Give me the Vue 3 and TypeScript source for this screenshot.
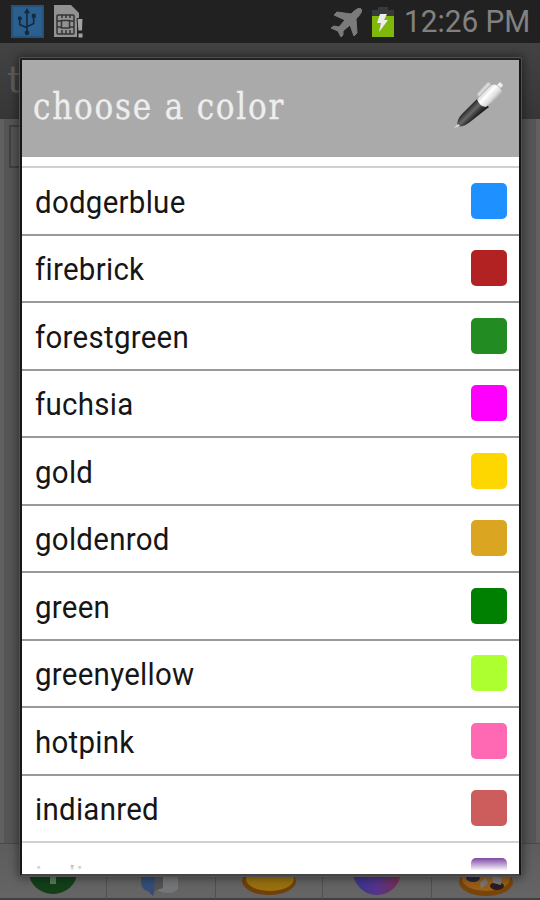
<script setup lang="ts">
interface NamedColor {
  name: string
  value: string
}

const colors: NamedColor[] = [
  { name: 'dodgerblue', value: '#1e90ff' },
  { name: 'firebrick', value: '#b22222' },
  { name: 'forestgreen', value: '#228b22' },
  { name: 'fuchsia', value: '#ff00ff' },
  { name: 'gold', value: '#ffd700' },
  { name: 'goldenrod', value: '#daa520' },
  { name: 'green', value: '#008000' },
  { name: 'greenyellow', value: '#adff2f' },
  { name: 'hotpink', value: '#ff69b4' },
  { name: 'indianred', value: '#cd5c5c' },
  { name: 'indigo', value: '#4b0082' },
]
</script>

<template>
  <div class="screen">
    <header class="status">
      <svg class="usb" width="33" height="33" viewBox="0 0 32 32">
        <rect width="32" height="32" rx="1" fill="#2a6090" />
        <rect x="1" y="1" width="30" height="30" fill="none" stroke="#24527a" stroke-width="2" />
        <path d="M15.500 27V6M15.500 22L8.500 19V14M15.500 21L22 18V11" fill="none" stroke="#172a3c" stroke-width="1.600" />
        <g fill="#172a3c">
          <path d="M15.500 3L18.500 8H12.500Z" />
          <circle cx="15.500" cy="27" r="2.300" />
          <circle cx="8.500" cy="13" r="2" />
          <rect x="20.200" y="8.500" width="3.800" height="3.800" />
        </g>
      </svg>
      <svg class="sim" width="32" height="34" viewBox="0 0 32 34">
        <path d="M1 0H18L26 8V14H24V32H1Z" fill="#929292" />
        <g fill="none" stroke="#343434" stroke-width="1.500">
          <rect x="4" y="10" width="17" height="19" rx="1" />
          <rect x="8.500" y="15.500" width="8" height="7.500" />
          <path d="M4 16H8M4 22H8M17 16H21M17 22H21M9 10V13M13 10V13M17 10V13M9 25V29M13 25V29M17 25V29" />
        </g>
        <path d="M24 13.500H30L29.500 26H25ZM25 28H30V33H25Z" fill="#a2a2a2" stroke="#252525" stroke-width="1" />
      </svg>
      <span class="grow"></span>
      <svg class="plane" width="32" height="30" viewBox="0 0 32 30">
        <path d="M30 1C28 -1 24 2 20 6L6 4L3 7L14 12L8 19L3 18L0 20L7 23L10 29L12 27L12 23L19 17L23 28L26 25L25 11C29 7 32 3 30 1Z" fill="#7b7b7b" stroke="#7b7b7b" stroke-linejoin="round" />
      </svg>
      <svg class="battery" width="22" height="30" viewBox="0 0 22 30">
        <path d="M6 0H16V3H22V10H0V3H6Z" fill="#373a3d" />
        <rect y="9" width="22" height="21" fill="#7fb80b" />
        <path d="M8 7H15L12 13H16L7 25L9 16H5Z" fill="#ededed" />
      </svg>
      <span class="clock">12:26 PM</span>
    </header>

    <div class="page">
      <div class="titlebar">t</div>
      <div class="canvas"><div class="field"></div></div>
      <nav class="tools">
        <div class="tool">
          <svg width="46" height="32" viewBox="0 0 46 32"><ellipse cx="23" cy="7" rx="24" ry="22" fill="#123f18" /><rect x="20" y="5" width="6" height="14" fill="#587a5a" /></svg>
        </div>
        <div class="tool">
          <svg width="42" height="32" viewBox="0 0 42 32"><path d="M18 6H38V24Q31 32 17 25Z" fill="#747577" /><path d="M1 8H20L13 31L8 26Q1 25 1 16Z" fill="#334d77" /><path d="M15 8H23V23L14 26Z" fill="#505256" /></svg>
        </div>
        <div class="tool">
          <svg width="54" height="34" viewBox="0 0 54 34"><ellipse cx="27" cy="16" rx="27" ry="14" fill="#70400b" /><ellipse cx="28" cy="14" rx="24" ry="12" fill="#98700e" /></svg>
        </div>
        <div class="tool">
          <svg width="48" height="32" viewBox="0 0 48 32">
            <defs><linearGradient id="orb"><stop stop-color="#35348c" /><stop offset=".5" stop-color="#54348b" /><stop offset="1" stop-color="#792c49" /></linearGradient></defs>
            <circle cx="24" cy="6" r="24" fill="url(#orb)" />
          </svg>
        </div>
        <div class="tool">
          <svg width="54" height="34" viewBox="0 0 54 34"><ellipse cx="27" cy="17" rx="27" ry="14" fill="#77450c" /><ellipse cx="27" cy="14" rx="24" ry="12" fill="#985d16" /><ellipse cx="14" cy="13" rx="7" ry="4" fill="#29243f" /><ellipse cx="38" cy="21" rx="7" ry="4" fill="#2c1b20" /><path d="M21 18L27 12L29 18L22 24ZM33 11L43 13L42 20L34 18Z" fill="#777" /></svg>
        </div>
      </nav>
    </div>

    <section class="dialog">
      <header class="heading">
        <h1>choose a color</h1>
        <svg class="pen" width="50" height="50" viewBox="0 0 50 50">
          <defs>
            <linearGradient id="barrel" gradientUnits="userSpaceOnUse" x1="12" y1="28" x2="23" y2="39"><stop stop-color="#222" /><stop offset=".4" stop-color="#686868" /><stop offset=".7" stop-color="#303030" /><stop offset="1" stop-color="#111" /></linearGradient>
            <linearGradient id="cap" gradientUnits="userSpaceOnUse" x1="28" y1="10" x2="40" y2="21"><stop stop-color="#c5c5c5" /><stop offset=".4" stop-color="#fff" /><stop offset=".75" stop-color="#dedede" /><stop offset="1" stop-color="#aaa" /></linearGradient>
          </defs>
          <path d="M3 45Q3 38 8 33L24 17L35 26L16 41Q8 47 3 45Z" fill="url(#barrel)" />
          <path d="M0 47L4 43L6 45Z" fill="#ddd" />
          <path d="M23 18L36 5Q40 2 44 5L48 10Q48 13 45 15L32 26Q25 25 23 18Z" fill="url(#cap)" />
          <path d="M23 13L34 1L37 3L25 16Z" fill="#d8d8d8" stroke="#bcbcbc" />
          <path d="M43 4L46 1L49 4L47 7Z" fill="#eee" />
        </svg>
      </header>
      <ul class="list">
        <li v-for="color in colors" :key="color.name" class="row">
          <span class="name">{{ color.name }}</span>
          <span class="swatch" :style="{ backgroundColor: color.value }"></span>
        </li>
      </ul>
    </section>
  </div>
</template>

<style>
body {
  margin: 0;
}
</style>

<style scoped>
* {
  box-sizing: border-box;
}
.screen {
  position: relative;
  display: flex;
  flex-direction: column;
  width: 540px;
  height: 900px;
  overflow: hidden;
  background: #555;
  font-family: Roboto, sans-serif;
}
.status {
  display: flex;
  flex: none;
  align-items: flex-start;
  height: 43px;
  padding: 5px 10px 0 11px;
  background: #212121;
}
.sim {
  margin-left: 9px;
}
.grow {
  flex: 1;
}
.plane {
  margin-top: 3px;
}
.battery {
  margin: 2px 0 0 9px;
}
.clock {
  width: 126px;
  margin-left: 10px;
  color: #818181;
  font-size: 31px;
  line-height: 34px;
  white-space: nowrap;
  transform: scaleX(0.96);
  transform-origin: left;
}
.page {
  display: flex;
  flex: 1;
  flex-direction: column;
  min-height: 0;
}
.titlebar {
  height: 76px;
  padding-left: 7px;
  background: linear-gradient(#434343, #363636);
  color: #5c5c5c;
  font: 38px/73px "DejaVu Serif", serif;
}
.canvas {
  flex: 1;
  padding: 6px 5px 0;
  border-left: 4px solid #606060;
  border-right: 4px solid #606060;
  background: #555;
}
.field {
  width: 100px;
  height: 43px;
  border: 2px solid #404040;
  border-right: 0;
}
.tools {
  display: grid;
  grid-template-columns: 107px 109px 107px 109px 108px;
  height: 57px;
  border-top: 1px solid #484848;
  border-bottom: 2px solid #404040;
  background: linear-gradient(#5c5c5c, #656565);
}
.tool {
  display: flex;
  justify-content: center;
  padding-top: 21px;
  border-right: 1px solid #505050;
}
.tool:last-child {
  border-right: 0;
}
.dialog {
  position: absolute;
  top: 58px;
  left: 20px;
  display: flex;
  flex-direction: column;
  width: 501px;
  height: 818px;
  overflow: hidden;
  border: 2px solid #161616;
  border-top-color: #222;
  border-bottom-color: #444;
  border-radius: 2px;
  background: #fff;
  box-shadow: 0 0 0 1px #505050, 0 0 10px 2px rgba(0, 0, 0, 0.45);
}
.heading {
  display: flex;
  flex: none;
  justify-content: space-between;
  height: 97px;
  padding: 21px 15px 0 11px;
  background: #aaa;
}
h1 {
  width: 255px;
  margin: 0;
  color: #eee;
  font: 400 37px/52px "DejaVu Serif Condensed", "DejaVu Serif", serif;
  letter-spacing: 1.9px;
  -webkit-text-stroke: 0.3px #eee;
  white-space: nowrap;
  transform: scaleX(0.935);
  transform-origin: left;
}
.list {
  position: relative;
  flex: 1;
  min-height: 0;
  margin: 0;
  padding: 0;
  overflow: hidden;
  border-top: 9px solid #fff;
  list-style: none;
}
.list::after {
  position: absolute;
  right: 0;
  bottom: 0;
  left: 0;
  height: 21px;
  background: linear-gradient(rgba(255, 255, 255, 0), #fff 85%);
  content: "";
}
.row {
  display: flex;
  align-items: center;
  justify-content: space-between;
  height: 67.5px;
  padding: 0 12.5px 0 13px;
  border-top: 2px solid #999;
}
.row:first-child,
.row:last-child {
  border-top-color: #d0d0d0;
}
.name {
  padding-top: 4px;
  color: #161616;
  font-size: 31px;
  font-variant-ligatures: none;
  letter-spacing: 0.3px;
  line-height: 40px;
  transform: scaleX(0.95);
  transform-origin: left;
}
.swatch {
  width: 36px;
  height: 36px;
  border-radius: 5px;
}
</style>
